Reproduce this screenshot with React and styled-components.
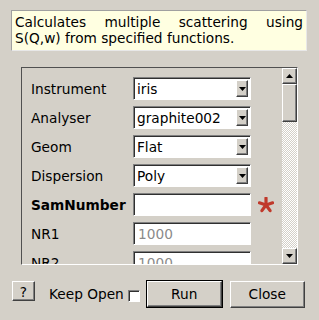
import React from "react";
import styled, { createGlobalStyle } from "styled-components";

const GlobalStyle = createGlobalStyle`
  html, body {
    margin: 0;
    padding: 0;
    background: #d4d0c8;
  }
  body {
    font-family: "DejaVu Sans", "Liberation Sans", sans-serif;
    font-size: 13.7px;
    color: #000;
  }
`;

const raised = `
  border: 1px solid;
  border-color: #ffffff #404040 #404040 #ffffff;
  box-shadow: inset -1px -1px #808080;
  background: #d4d0c8;
`;

const sunken = `
  border: 1px solid;
  border-color: #808080 #ffffff #ffffff #808080;
  box-shadow: inset 1px 1px #303030;
  background: #ffffff;
`;

const Window = styled.div`
  width: 319px;
  height: 320px;
  box-sizing: border-box;
  display: flex;
  flex-direction: column;
  padding-top: 10px;
`;

const Description = styled.div`
  margin-left: 11px;
  width: 296px;
  height: 41px;
  box-sizing: border-box;
  padding: 3px 3px 0 3px;
  background: #ffffe1;
  border: 1px solid;
  border-color: #a0a0a0 #e8e8e8 #e8e8e8 #a0a0a0;
  line-height: 16px;
  text-align: justify;
`;

const Frame = styled.div`
  margin: 16px 0 0 21px;
  width: 277px;
  height: 198px;
  box-sizing: border-box;
  border: 1px solid;
  border-color: #505050 #ffffff #ffffff #505050;
  display: flex;
`;

const Form = styled.div`
  flex: 1;
  overflow: hidden;
  padding: 9px 0 0 9px;
  display: flex;
  flex-direction: column;
  gap: 6px;
`;

const Row = styled.div`
  display: flex;
  align-items: center;
  height: 23px;
  flex-shrink: 0;
`;

const Label = styled.span`
  width: 102px;
  font-weight: ${(p) => (p.$bold ? "bold" : "normal")};
`;

const Combo = styled.div`
  ${sunken}
  width: 118px;
  height: 23px;
  box-sizing: border-box;
  display: flex;
  align-items: center;
  padding: 0 2px 0 3px;
`;

const ComboText = styled.span`
  flex: 1;
  padding-top: 1px;
`;

const DropButton = styled.span`
  ${raised}
  width: 12px;
  height: 17px;
  box-sizing: border-box;
  display: flex;
  align-items: center;
  justify-content: center;
`;

const Entry = styled.div`
  ${sunken}
  width: 118px;
  height: 23px;
  box-sizing: border-box;
  padding: 1px 0 0 4px;
  display: flex;
  align-items: center;
  color: ${(p) => (p.$placeholder ? "#8a8a8a" : "#000")};
`;

const Required = styled.span`
  margin-left: 7px;
  display: flex;
`;

const ScrollBar = styled.div`
  width: 15px;
  display: flex;
  flex-direction: column;
  background: repeating-conic-gradient(#d4d0c8 0% 25%, #ffffff 0% 50%) 0 0 / 2px 2px;
`;

const ScrollButton = styled.div`
  ${raised}
  height: 16px;
  box-sizing: border-box;
  display: flex;
  align-items: center;
  justify-content: center;
`;

const Thumb = styled.div`
  ${raised}
  height: 38px;
  box-sizing: border-box;
`;

const Trough = styled.div`
  flex: 1;
`;

const Footer = styled.div`
  display: flex;
  align-items: center;
  padding: 15px 0 0 12px;
`;

const Button = styled.button`
  ${raised}
  font: inherit;
  color: #000;
  padding: 0;
  width: ${(p) => p.$w}px;
  height: ${(p) => p.$h}px;
  outline: ${(p) => (p.$default ? "1px solid #000" : "none")};
  outline-offset: 0;
  margin: ${(p) => (p.$default ? "1px" : "0")};
  margin-left: ${(p) => p.$ml || (p.$default ? 1 : 0)}px;
`;

const HelpButton = styled(Button)`
  align-self: flex-start;
  margin-top: 1px;
  padding-top: 1px;
`;

const KeepOpen = styled.label`
  display: flex;
  align-items: center;
  margin: 0 6px 0 14px;
  gap: 4px;
`;

const CheckBox = styled.span`
  ${sunken}
  width: 12px;
  height: 12px;
  box-sizing: border-box;
  margin-top: 3px;
`;

const Arrow = ({ up }) => (
  <svg width="7" height="4" viewBox="0 0 7 4">
    <polygon points={up ? "0,4 7,4 3.5,0" : "0,0 7,0 3.5,4"} fill="#000" />
  </svg>
);

const Star = () => (
  <svg width="16" height="16" viewBox="-8 -8 16 16">
    {[0, 72, 144, 216, 288].map((a) => (
      <line
        key={a}
        x1="0"
        y1="0"
        x2="0"
        y2="-7"
        stroke="#c0392b"
        strokeWidth="3.2"
        strokeLinecap="round"
        transform={`rotate(${a})`}
      />
    ))}
  </svg>
);

const fields = [
  { label: "Instrument", value: "iris", combo: true },
  { label: "Analyser", value: "graphite002", combo: true },
  { label: "Geom", value: "Flat", combo: true },
  { label: "Dispersion", value: "Poly", combo: true },
  { label: "SamNumber", value: "", bold: true, required: true },
  { label: "NR1", value: "1000", placeholder: true },
  { label: "NR2", value: "1000", placeholder: true },
];

const App = () => (
  <Window>
    <GlobalStyle />
    <Description>
      Calculates multiple scattering using S(Q,w) from specified functions.
    </Description>
    <Frame>
      <Form>
        {fields.map((f) => (
          <Row key={f.label}>
            <Label $bold={f.bold}>{f.label}</Label>
            {f.combo ? (
              <Combo>
                <ComboText>{f.value}</ComboText>
                <DropButton>
                  <Arrow />
                </DropButton>
              </Combo>
            ) : (
              <Entry $placeholder={f.placeholder}>{f.value}</Entry>
            )}
            {f.required && (
              <Required>
                <Star />
              </Required>
            )}
          </Row>
        ))}
      </Form>
      <ScrollBar>
        <ScrollButton>
          <Arrow up />
        </ScrollButton>
        <Thumb />
        <Trough />
        <ScrollButton>
          <Arrow />
        </ScrollButton>
      </ScrollBar>
    </Frame>
    <Footer>
      <HelpButton $w={23} $h={20}>?</HelpButton>
      <KeepOpen>
        Keep Open
        <CheckBox />
      </KeepOpen>
      <Button $default $w={75} $h={26}>Run</Button>
      <Button $w={75} $h={27} $ml={7}>Close</Button>
    </Footer>
  </Window>
);

export default App;
